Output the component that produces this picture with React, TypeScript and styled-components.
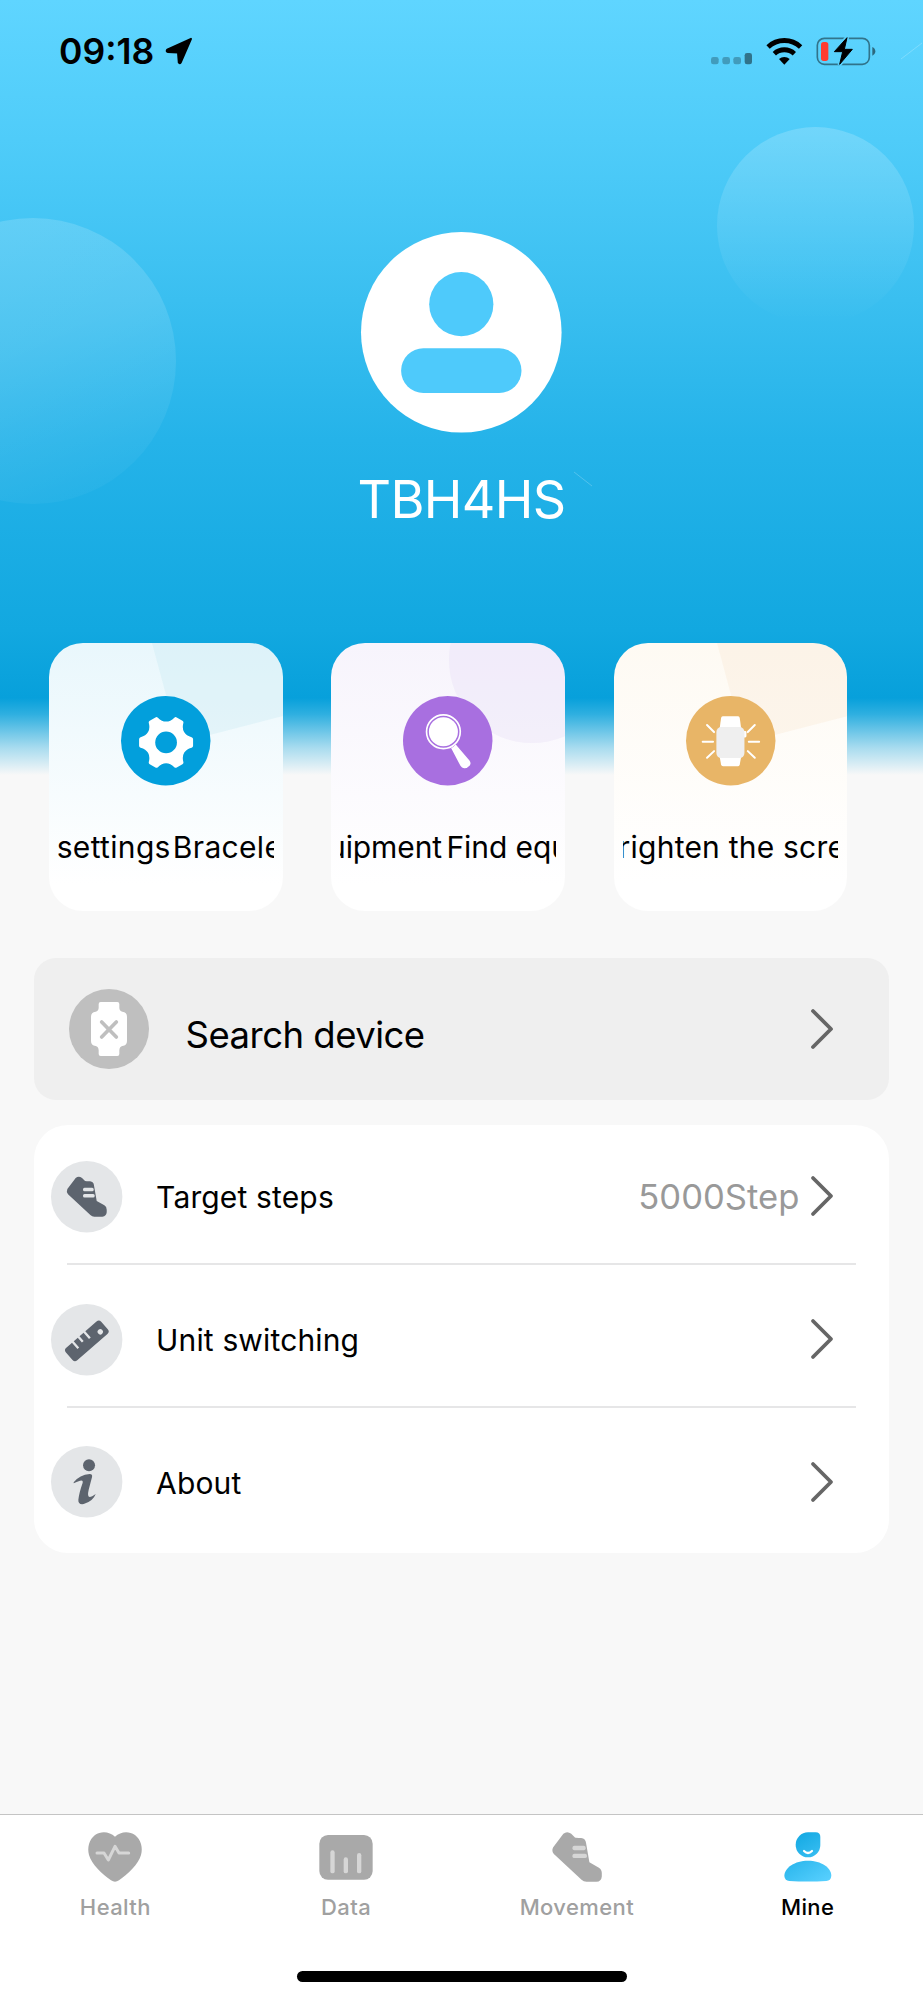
import React from "react";
import styled, { createGlobalStyle } from "styled-components";

const GlobalStyle = createGlobalStyle`
  *, *::before, *::after { box-sizing: border-box; }
  body { margin: 0; background: #f8f8f8; }
  svg { display: block; flex: none; overflow: visible; }
`;

const Page = styled.div`
  position: relative;
  display: flex;
  flex-direction: column;
  width: 923px;
  height: 2000px;
  overflow: hidden;
  color: #000;
  font-family: Inter, "Liberation Sans", sans-serif;
  background: linear-gradient(
    180deg,
    #5fd5ff 0px,
    #4fccf9 140px,
    #3abff0 300px,
    #25b3e9 440px,
    #12a8e0 630px,
    #07a0db 698px,
    #2eafe0 714px,
    #a9dcef 748px,
    #f8f8f8 775px
  );
`;

const Bubble = styled.div<{ $x: number; $y: number; $size: number; $fill: string }>`
  position: absolute;
  left: ${(p) => p.$x}px;
  top: ${(p) => p.$y}px;
  width: ${(p) => p.$size}px;
  height: ${(p) => p.$size}px;
  border-radius: 50%;
  background: ${(p) => p.$fill};
`;

const Streaks = styled.svg`
  position: absolute;
  left: 0;
  top: 0;
`;

const Content = styled.div`
  position: relative;
  display: flex;
  flex-direction: column;
  height: 100%;
`;

const StatusBar = styled.header`
  display: flex;
  align-items: center;
  height: 102px;
  padding: 0 47px 0 59px;
`;

const Clock = styled.span`
  width: 106px;
  padding-top: 1px;
  font-size: 35.5px;
  font-weight: 600;
  line-height: 40px;
  white-space: nowrap;
`;

const StatusIcons = styled.div`
  margin-left: auto;
`;

const Profile = styled.section`
  display: flex;
  flex-direction: column;
  align-items: center;
  padding-top: 130px;
`;

const UserName = styled.h1`
  margin: 37.5px 0 0;
  font-size: 52px;
  font-weight: 400;
  line-height: 60px;
  letter-spacing: -0.65px;
  color: #fff;
`;

const Shortcuts = styled.section`
  display: flex;
  gap: 48.8px;
  margin-top: 112.6px;
  padding-left: 49px;
`;

const ShortcutCard = styled.div<{ $tint: string }>`
  position: relative;
  display: flex;
  flex-direction: column;
  align-items: center;
  width: 233.5px;
  height: 268px;
  padding-top: 53.3px;
  border-radius: 34px;
  overflow: hidden;
  background: linear-gradient(180deg, ${(p) => p.$tint} 0%, #fff 90%);
`;

const CardDecor = styled.svg`
  position: absolute;
  left: 0;
  top: 0;
`;

const CardIcon = styled.div`
  position: relative;
`;

const Marquee = styled.div`
  position: relative;
  width: 215.5px;
  margin-top: 41.5px;
  overflow: hidden;
`;

const MarqueeText = styled.div<{ $shift: number; $spacing: number; $gap: number }>`
  display: flex;
  gap: ${(p) => p.$gap}px;
  margin-left: ${(p) => p.$shift}px;
  font-size: 30px;
  line-height: 40px;
  letter-spacing: ${(p) => p.$spacing}px;
  white-space: nowrap;
`;

const SearchCard = styled.section`
  display: flex;
  align-items: center;
  height: 142.4px;
  margin: 47px 33.7px 0;
  padding: 0 56px 0 35.6px;
  border-radius: 22px;
  background: #efefef;
`;

const SearchLabel = styled.span`
  flex: 1;
  margin-left: 36.3px;
  padding-top: 12px;
  font-size: 36.5px;
  line-height: 44px;
  letter-spacing: -0.52px;
`;

const ListCard = styled.section`
  margin: 25px 33.7px 0;
  border-radius: 34px;
  background: #fff;
`;

const ListRow = styled.div`
  position: relative;
  display: flex;
  align-items: center;
  height: 142.8px;
  padding: 0 56px 0 17.6px;

  &:not(:last-child)::after {
    content: "";
    position: absolute;
    left: 33.3px;
    right: 33.3px;
    bottom: 2.4px;
    height: 2.4px;
    background: #e6e6e7;
  }
`;

const RowLabel = styled.span`
  flex: 1;
  margin-left: 33.4px;
  padding-top: 1px;
  font-size: 30px;
  line-height: 40px;
  letter-spacing: 0.15px;
`;

const RowValue = styled.span`
  margin-right: 12px;
  font-size: 34.6px;
  line-height: 40px;
  color: #999;
`;

const TabBar = styled.nav`
  display: grid;
  grid-template-columns: repeat(4, 1fr);
  height: 157px;
  margin-top: auto;
  border-top: 1.5px solid #c4c4c4;
  background: #fff;
`;

const TabItem = styled.div<{ $active?: boolean }>`
  display: flex;
  flex-direction: column;
  align-items: center;
  padding-top: 17px;
  color: ${(p) => (p.$active ? "#000" : "#a0a0a0")};
`;

const TabLabel = styled.span`
  margin-top: 10px;
  font-size: 22px;
  font-weight: 500;
  line-height: 30px;
  letter-spacing: 0.4px;
`;

const HomeArea = styled.div`
  display: flex;
  justify-content: center;
  height: 29px;
  background: #fff;
`;

const HomeBar = styled.div`
  width: 330px;
  height: 11px;
  border-radius: 6px;
  background: #000;
`;

const LocationArrow = () => (
  <svg width="28" height="28" viewBox="0 0 28 28">
    <path
      d="M26 1.8 L2.2 12.6 Q1 14.3 2.6 14.9 L13 15.4 L13.8 25.6 Q14.6 27 15.8 25.4 Z"
      fill="#000"
      stroke="#000"
      strokeWidth="2"
      strokeLinejoin="round"
    />
  </svg>
);

const SystemIcons = () => (
  <svg width="166" height="32" viewBox="60 42 498 96">
    <g fill="#000">
      <g opacity="0.25">
        <rect x="63" y="108" width="23" height="22" rx="7" />
        <rect x="97" y="108" width="23" height="22" rx="7" />
        <rect x="130" y="108" width="23" height="22" rx="7" />
      </g>
      <rect x="164" y="96" width="22" height="34" rx="7" opacity="0.45" />
      <path d="M283 131 L267 114 A24 24 0 0 1 299 114 Z" />
    </g>
    <g fill="none" stroke="#000" strokeWidth="14.5">
      <path d="M234.2 77.7 A71.5 71.5 0 0 1 331.8 77.7" />
      <path d="M253 98 A44 44 0 0 1 313 98" />
    </g>
    <mask id="boltGap">
      <rect x="370" y="40" width="190" height="100" fill="#fff" />
      <path d="M472 48 L432 93 H457 L448 132 L488 84 H463 Z" fill="#000" stroke="#000" strokeWidth="11" />
    </mask>
    <g mask="url(#boltGap)">
      <rect x="382" y="52" width="156" height="78" rx="21" fill="none" stroke="#000" strokeOpacity="0.45" strokeWidth="5" />
    </g>
    <path d="M547 78 Q556 82 556 91 Q556 100 547 104 Z" fill="#000" opacity="0.5" />
    <rect x="393" y="63" width="22" height="57" rx="8" fill="#ff3b30" />
    <path d="M471 50 L433 92 H458 L449 130 L487 85 H463 Z" fill="#000" stroke="#000" strokeWidth="3" strokeLinejoin="round" />
  </svg>
);

const Avatar = () => (
  <svg width="200.6" height="200.6" viewBox="0 0 200 200">
    <circle cx="100" cy="100" r="100" fill="#fff" />
    <circle cx="100" cy="72" r="32" fill="#4ecafb" />
    <rect x="40" y="116" width="120" height="44.5" rx="22.2" fill="#4ecafb" />
  </svg>
);

const polar = (r: number, deg: number) => {
  const a = (deg * Math.PI) / 180;
  return `${(r * Math.cos(a)).toFixed(2)} ${(r * Math.sin(a)).toFixed(2)}`;
};

// Six teeth joined by scooped valleys.
const gearPath =
  [0, 60, 120, 180, 240, 300]
    .map((t, i) => `${i ? "L" : "M"}${polar(75.5, t - 7.5)} L${polar(75.5, t + 7.5)} C${polar(53, t + 18)} ${polar(53, t + 42)} ${polar(75.5, t + 52.5)}`)
    .join(" ") + "Z";

const GearIcon = () => (
  <svg width="89.5" height="89.5" viewBox="273 228 268 268">
    <circle cx="407" cy="362" r="134" fill="#029fdc" />
    <g transform="translate(408 367)">
      <path d={gearPath} fill="#fff" stroke="#fff" strokeWidth="12" strokeLinejoin="round" />
      <circle r="32.5" fill="#029fdc" />
    </g>
  </svg>
);

const MagnifierIcon = () => (
  <svg width="89.5" height="89.5" viewBox="280 228 268 268">
    <circle cx="414" cy="362" r="134" fill="#a86fe0" />
    <circle cx="401" cy="335" r="50.5" fill="none" stroke="#fff" strokeWidth="5" />
    <circle cx="401" cy="335" r="43.5" fill="#fff" />
    <path d="M424 384 Q432 380 438 373 L479 421 Q485 429 480 436 Q472 445 463 444 Q456 444 452 437 Z" fill="#fff" />
  </svg>
);

const BrightenIcon = () => (
  <svg width="89.5" height="89.5" viewBox="287 228 268 268">
    <circle cx="421" cy="362" r="134" fill="#e8b567" />
    <g fill="#fff">
      <path d="M397 289 H443 Q447 289 448 294 L452 324 H388 L392 294 Q393 289 397 289 Z" />
      <path d="M388 411 H452 L448 433 Q447 438 443 438 H398 Q393 438 392 433 Z" />
      <rect x="456" y="333" width="12" height="19" rx="4" />
    </g>
    <rect x="378" y="321" width="84" height="93" rx="15" fill="#efefef" />
    <g stroke="#fff" strokeWidth="6" strokeLinecap="round">
      <path d="M350 315 L371 336 M337 365 H368 M350 413 L371 393" />
      <path d="M493 315 L472 336 M475 365 H506 M493 413 L472 393" />
    </g>
  </svg>
);

const WatchOffIcon = () => (
  <svg width="80" height="80" viewBox="148 147 240 240">
    <circle cx="268" cy="267" r="120" fill="#bfbfbf" />
    <path
      d="M243 186 H293 Q299 186 299 192 V204 Q300 214 308 215 Q322 217 322 230 V303 Q322 316 308 318 Q300 319 299 331 V342 Q299 348 293 348 H243 Q237 348 237 342 V331 Q236 319 228 318 Q214 316 214 303 V230 Q214 217 228 215 Q236 214 237 204 V192 Q237 186 243 186 Z"
      fill="#fff"
    />
    <path d="M246 246 L290 291 M290 246 L246 291" stroke="#bfbfbf" strokeWidth="11" strokeLinecap="round" />
  </svg>
);

const ShoeShape = ({ body, lace }: { body: string; lace: string }) => (
  <g>
    <path
      d="M168 713 Q177 705 187 713 L196 722 Q199 723 211 723 Q222 724 223 736 L231 782 L254 795 Q261 799 261 808 V816 Q260 828 248 829 H224 Q217 829 212 824 L145 762 Q139 755 143 746 Z"
      fill={body}
    />
    <rect x="190" y="742" width="32" height="10.5" rx="4.5" fill={lace} />
    <rect x="190" y="761" width="35" height="10.5" rx="4.5" fill={lace} />
  </g>
);

const RowShoeIcon = () => (
  <svg width="71.4" height="71.4" viewBox="94 662 214 214">
    <circle cx="201" cy="769" r="107" fill="#e4e6e8" />
    <ShoeShape body="#5d646e" lace="#e4e6e8" />
  </svg>
);

const RulerIcon = () => (
  <svg width="71.4" height="71.4" viewBox="94 130 214 214">
    <circle cx="201" cy="237" r="107" fill="#e4e6e8" />
    <g transform="translate(201.5 240.5) rotate(-41)">
      <rect x="-70" y="-25" width="140" height="50" rx="10" fill="#5d646e" />
      <path d="M-34 -27 V0 M-11 -27 V-6 M12 -27 V0" stroke="#e4e6e8" strokeWidth="7" />
      <circle cx="48" cy="6" r="8" fill="#e4e6e8" />
    </g>
  </svg>
);

const InfoIcon = () => (
  <svg width="71.4" height="71.4" viewBox="94 559 214 214">
    <circle cx="201" cy="666" r="107" fill="#e4e6e8" />
    <g fill="#5d646e">
      <circle cx="208" cy="617" r="18" />
      <path d="M162 668 Q180 645 210 643 Q219 643 217 652 L207 690 Q202 711 210 712 Q216 712 228 703 Q220 725 192 733 Q175 736 176 720 Q178 700 189 669 Q191 660 181 663 Q170 667 162 671 Z" />
    </g>
  </svg>
);

const Chevron = () => (
  <svg width="22" height="40" viewBox="0 0 22 40">
    <path d="M2 2 L20 20 L2 38" fill="none" stroke="#666" strokeWidth="3.8" strokeLinecap="round" strokeLinejoin="round" />
  </svg>
);

const HealthIcon = () => (
  <svg width="54" height="50" viewBox="265 125 162 150">
    <path
      d="M346 139 C362 124 387 121 406 134 C424 148 430 172 424 194 C416 222 385 251 358 270 Q346 278 334 270 C307 251 276 222 268 194 C262 172 268 148 286 134 C305 121 330 124 346 139 Z"
      fill="#a9a9a9"
    />
    <path d="M292 188 H313 L326 209 L346 168 L358 188 H387" fill="none" stroke="#d6d6d6" strokeWidth="9" strokeLinecap="round" strokeLinejoin="round" />
  </svg>
);

const DataIcon = () => (
  <svg width="54" height="50" viewBox="958 125 162 150">
    <rect x="959" y="134" width="160" height="134" rx="26" fill="#a9a9a9" />
    <g fill="#d6d6d6">
      <rect x="992" y="180" width="13" height="69" rx="6.5" />
      <rect x="1032" y="201" width="13" height="48" rx="6.5" />
      <rect x="1072" y="188" width="13" height="61" rx="6.5" />
    </g>
  </svg>
);

const MovementIcon = () => (
  <svg width="50" height="50" viewBox="140.5 708.5 121 121">
    <ShoeShape body="#a9a9a9" lace="#d6d6d6" />
  </svg>
);

const MineIcon = () => (
  <svg width="48" height="50" viewBox="968 125 144 150">
    <defs>
      <linearGradient id="mineFill" gradientUnits="userSpaceOnUse" x1="1000" y1="130" x2="1090" y2="274">
        <stop offset="0" stopColor="#12a8e2" />
        <stop offset="1" stopColor="#56cffe" />
      </linearGradient>
    </defs>
    <path d="M1040 126 H1063 Q1077 126 1077 140 V164 A37 37 0 0 1 1003 164 V163 A37 37 0 0 1 1040 126 Z" fill="url(#mineFill)" />
    <path d="M1040 211 C1080 211 1110 232 1110 256 Q1109 270 1095 272 Q1040 275 984 272 Q970 270 969 256 C970 232 1000 211 1040 211 Z" fill="url(#mineFill)" />
    <path d="M1028 182 Q1040 194 1052 182" fill="none" stroke="#fff" strokeWidth="6.5" strokeLinecap="round" />
  </svg>
);

const CornerDecor = ({ fill }: { fill: string }) => (
  <CardDecor width="234" height="268" viewBox="0 0 234 268">
    <path d="M103 0 L130 100 L234 73 V0 Z" fill={fill} />
  </CardDecor>
);

const RoundDecor = ({ fill }: { fill: string }) => (
  <CardDecor width="234" height="268" viewBox="0 0 234 268">
    <circle cx="201" cy="17" r="83" fill={fill} />
  </CardDecor>
);

// Each caption is a scrolling label caught mid-cycle, so it starts off-centre and is clipped.
const shortcuts = [
  { parts: ["settings", "Bracelet"], shift: -1.3, spacing: 0.33, gap: 2, tint: "#e9f7fc", decor: <CornerDecor fill="rgba(190,230,240,0.28)" />, icon: <GearIcon /> },
  { parts: ["uipment", "Find equipment"], shift: -12.3, spacing: -0.1, gap: 4.5, tint: "#f7f4fc", decor: <RoundDecor fill="rgba(225,210,243,0.25)" />, icon: <MagnifierIcon /> },
  { parts: ["righten the screen"], shift: -4, spacing: 0.22, gap: 0, tint: "#fefaf3", decor: <CornerDecor fill="rgba(250,230,208,0.33)" />, icon: <BrightenIcon /> },
];

const rows = [
  { label: "Target steps", value: "5000Step", icon: <RowShoeIcon /> },
  { label: "Unit switching", value: "", icon: <RulerIcon /> },
  { label: "About", value: "", icon: <InfoIcon /> },
];

const tabs = [
  { label: "Health", icon: <HealthIcon /> },
  { label: "Data", icon: <DataIcon /> },
  { label: "Movement", icon: <MovementIcon /> },
  { label: "Mine", icon: <MineIcon />, active: true },
];

export default function App() {
  return (
    <Page>
      <GlobalStyle />
      <Bubble $x={-110} $y={217.5} $size={286} $fill="linear-gradient(160deg, rgba(255,255,255,0.17), rgba(255,255,255,0.13) 45%, rgba(255,255,255,0.02) 95%)" />
      <Bubble $x={716.5} $y={127} $size={197} $fill="linear-gradient(180deg, rgba(255,255,255,0.19), rgba(255,255,255,0))" />
      <Streaks width="923" height="600" fill="none" stroke="#fff" strokeOpacity="0.22">
        <path d="M901 59 L922 43 M574 472 L592 486" />
      </Streaks>
      <Content>
        <StatusBar>
          <Clock>09:18</Clock>
          <LocationArrow />
          <StatusIcons>
            <SystemIcons />
          </StatusIcons>
        </StatusBar>
        <Profile>
          <Avatar />
          <UserName>TBH4HS</UserName>
        </Profile>
        <Shortcuts>
          {shortcuts.map((s) => (
            <ShortcutCard key={s.parts[0]} $tint={s.tint}>
              {s.decor}
              <CardIcon>{s.icon}</CardIcon>
              <Marquee>
                <MarqueeText $shift={s.shift} $spacing={s.spacing} $gap={s.gap}>
                  {s.parts.map((part) => (
                    <span key={part}>{part}</span>
                  ))}
                </MarqueeText>
              </Marquee>
            </ShortcutCard>
          ))}
        </Shortcuts>
        <SearchCard>
          <WatchOffIcon />
          <SearchLabel>Search device</SearchLabel>
          <Chevron />
        </SearchCard>
        <ListCard>
          {rows.map((r) => (
            <ListRow key={r.label}>
              {r.icon}
              <RowLabel>{r.label}</RowLabel>
              {r.value && <RowValue>{r.value}</RowValue>}
              <Chevron />
            </ListRow>
          ))}
        </ListCard>
        <TabBar>
          {tabs.map((t) => (
            <TabItem key={t.label} $active={t.active}>
              {t.icon}
              <TabLabel>{t.label}</TabLabel>
            </TabItem>
          ))}
        </TabBar>
        <HomeArea>
          <HomeBar />
        </HomeArea>
      </Content>
    </Page>
  );
}
